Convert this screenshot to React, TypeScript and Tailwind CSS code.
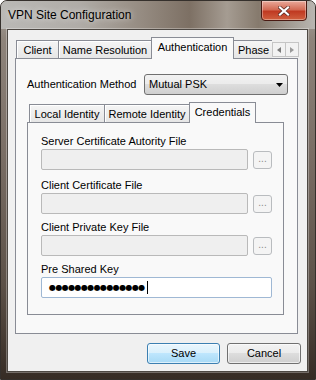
import React from "react";

const unsel =
  "border border-b-0 border-[#898c95] bg-[linear-gradient(180deg,#f5f5f5_0%,#e6e6e6_100%)] [box-shadow:inset_1px_1px_0_#ffffff] text-center pt-[3px] leading-[13px] whitespace-nowrap overflow-hidden";
const sel =
  "relative z-10 -mb-px border border-b-0 border-[#898c95] bg-[#f9f9f9] text-center pt-[3px] leading-[13px] whitespace-nowrap";

function FileRow({ label, first }: { label: string; first?: boolean }) {
  return (
    <>
      <div className={`${first ? "mt-[12px]" : "mt-[7px]"} h-[13px] leading-[13px] whitespace-nowrap`}>{label}</div>
      <div className="mt-[1px] flex items-center">
        <div className="w-[207px] h-[21px] rounded-[2px] border border-[#b9b9b9] bg-[#efefef]" />
        <div className="ml-[5px] w-[19px] h-[18px] rounded-[3px] border border-[#b9bcbf] bg-[#f4f4f4] text-[#8a8a8a] text-center leading-[14px] text-[10px]">
          ...
        </div>
      </div>
    </>
  );
}

export default function App() {
  return (
    <div className="w-[316px] h-[380px] overflow-hidden flex flex-col rounded-t-[7px] border border-[#35302c] bg-[linear-gradient(180deg,#aaa6a1_0%,#8e847b_10%,#7a6e65_40%,#5c5148_75%,#362c25_100%)] font-['Liberation_Sans',Arial,sans-serif] text-[11px] text-black">
      {/* title bar */}
      <div className="h-[28px] flex items-start bg-[linear-gradient(90deg,#bab9b6_0%,#b0aca7_25%,#958b81_45%,#7d7064_60%,#a59c92_72%,#867a6d_82%,#b9b6b1_100%)]">
        <div className="pl-[7px] pt-[7px] text-[12px] leading-[14px] whitespace-nowrap [text-shadow:0_0_6px_rgba(255,255,255,0.8)]">
          VPN Site Configuration
        </div>
        <div className="ml-auto mr-[8px] -mt-px w-[46px] h-[21px] rounded-b-[4px] border border-[#4a1a12] bg-[linear-gradient(180deg,#e9a99a_0%,#d36b55_45%,#c03a22_55%,#d0603f_100%)] [box-shadow:inset_0_0_0_1px_rgba(255,255,255,0.35)] flex items-center justify-center">
          <svg width="12" height="10" viewBox="0 0 12 10">
            <path d="M2 1.5 L10 8.5 M10 1.5 L2 8.5" stroke="#5a2a22" strokeWidth="3.6" strokeLinecap="square" />
            <path d="M2 1.5 L10 8.5 M10 1.5 L2 8.5" stroke="#ffffff" strokeWidth="2.2" strokeLinecap="square" />
          </svg>
        </div>
      </div>

      {/* client area */}
      <div className="ml-[6px] w-[301px] h-[343px] border border-[#4d4843] [box-shadow:0_0_0_1px_rgba(255,255,255,0.3)] bg-[#f0f0f0] flex flex-col pl-[7px]">
        {/* outer tab control */}
        <div className="mt-[7px] w-[283px]">
          <div className="relative h-[21px] flex items-end">
            <div className={`${unsel} ml-[1px] w-[43px] h-[18px]`}>Client</div>
            <div className={`${unsel} -ml-px w-[94px] h-[18px]`}>Name Resolution</div>
            <div className={`${sel} -ml-px w-[83px] h-[22px]`}>Authentication</div>
            <div className="-ml-px w-[39px] h-[18px] border-l border-t border-[#898c95] bg-[linear-gradient(180deg,#f5f5f5_0%,#e6e6e6_100%)] pt-[3px] pl-[4px] leading-[13px] whitespace-nowrap">
              Phase
            </div>
            <div className="absolute left-[257px] top-[5px] flex">
              <div className="w-[14px] h-[15px] border border-[#c5c5c5] bg-[#f2f2f2] flex items-center justify-center">
                <svg width="4" height="6" viewBox="0 0 4 6">
                  <path d="M4 0V6L0 3Z" fill="#7a7a7a" />
                </svg>
              </div>
              <div className="-ml-px w-[14px] h-[15px] border border-[#c5c5c5] bg-[#f2f2f2] flex items-center justify-center">
                <svg width="4" height="6" viewBox="0 0 4 6">
                  <path d="M0 0V6L4 3Z" fill="#9a9a9a" />
                </svg>
              </div>
            </div>
          </div>
          <div className="w-[283px] h-[276px] border border-[#898c95] bg-[#f9f9f9] flex flex-col">
            <div className="mt-[15px] pl-[11px] flex items-center h-[21px]">
              <div className="w-[117px] leading-[13px] whitespace-nowrap">Authentication Method</div>
              <div className="w-[144px] h-[21px] rounded-[3px] border border-[#707070] bg-[linear-gradient(180deg,#f2f2f2_0%,#ebebeb_50%,#dddddd_50%,#cfcfcf_100%)] flex items-center pl-[4px] pr-[4px]">
                <span className="flex-1 leading-[13px]">Mutual PSK</span>
                <svg width="7" height="4" viewBox="0 0 7 4">
                  <path d="M0 0H7L3.5 4Z" fill="#000" />
                </svg>
              </div>
            </div>

            {/* inner tab control */}
            <div className="ml-[11px] mt-[7px] w-[257px]">
              <div className="h-[20px] flex items-end">
                <div className={`${unsel} ml-[2px] w-[76px] h-[18px]`}>Local Identity</div>
                <div className={`${unsel} -ml-px w-[86px] h-[18px]`}>Remote Identity</div>
                <div className={`${sel} -ml-px w-[67px] h-[21px]`}>Credentials</div>
              </div>
              <div className="w-[257px] h-[193px] border border-[#898c95] bg-[#f9f9f9] flex flex-col pl-[13px]">
                <FileRow label="Server Certificate Autority File" first />
                <div className="mt-[2px]" />
                <FileRow label="Client Certificate File" />
                <FileRow label="Client Private Key File" />
                <div className="mt-[7px] h-[13px] leading-[13px] whitespace-nowrap">Pre Shared Key</div>
                <div className="mt-[1px] w-[231px] h-[21px] rounded-[2px] border border-[#9fb8d4] bg-white flex items-center pl-[7px]">
                  <span className="font-['DejaVu_Sans',sans-serif] text-[8px] leading-[10px] tracking-[-0.6px] whitespace-nowrap">
                    ●●●●●●●●●●●●●●●
                  </span>
                  <span className="ml-[2px] w-px h-[13px] bg-black" />
                </div>
              </div>
            </div>
          </div>
        </div>

        {/* buttons */}
        <div className="mt-[9px] flex justify-end pr-[6px] gap-[7px]">
          <div className="w-[73px] h-[21px] rounded-[3px] border border-[#3c7fb1] bg-[linear-gradient(180deg,#eaf6fd_0%,#d9f0fc_50%,#bee6fd_50%,#a7d9f5_100%)] [box-shadow:inset_0_0_0_1px_rgba(255,255,255,0.6)] flex items-center justify-center leading-[13px]">
            Save
          </div>
          <div className="w-[74px] h-[21px] rounded-[3px] border border-[#707070] bg-[linear-gradient(180deg,#f2f2f2_0%,#ebebeb_50%,#dddddd_50%,#cfcfcf_100%)] [box-shadow:inset_0_0_0_1px_rgba(255,255,255,0.6)] flex items-center justify-center leading-[13px]">
            Cancel
          </div>
        </div>
      </div>
    </div>
  );
}
